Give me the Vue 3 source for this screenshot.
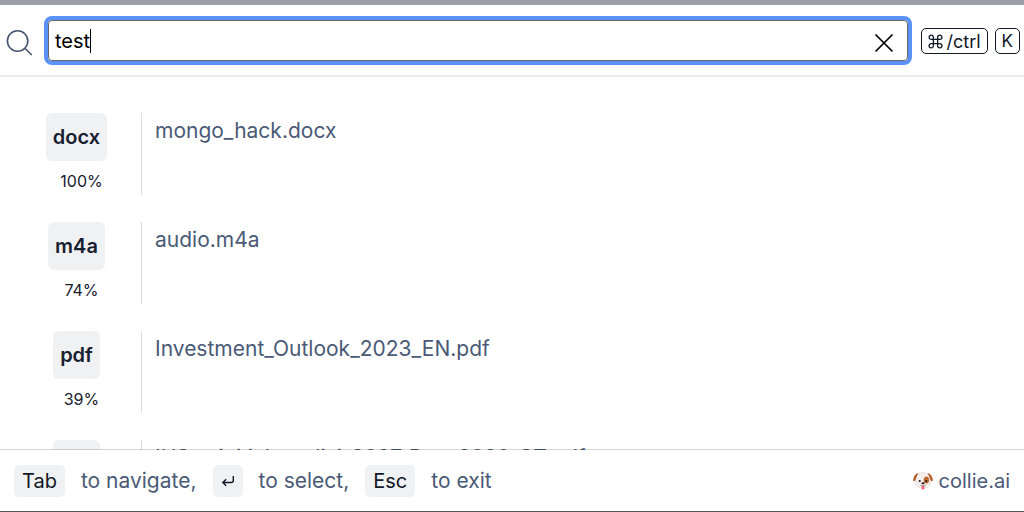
<script setup>
import { ref, onMounted } from 'vue'

const query = ref('test')
const searchInput = ref(null)

const results = ref([
  { type: 'docx', score: 100, name: 'mongo_hack.docx' },
  { type: 'm4a', score: 74, name: 'audio.m4a' },
  { type: 'pdf', score: 39, name: 'Investment_Outlook_2023_EN.pdf' },
  { type: 'pdf', score: 35, name: 'IHS_minitial_analisi_2027_Dec_2020_CT.pdf' }
])

function clearQuery() {
  query.value = ''
  searchInput.value.focus()
}

onMounted(() => {
  searchInput.value.focus()
})
</script>

<template>
  <div class="dialog">
    <!-- Search bar -->
    <header class="search-bar">
      <label class="search-label" for="search" aria-label="Search">
        <svg width="28" height="28" viewBox="0 0 28 28" fill="none" stroke="#44546f" stroke-width="1.6">
          <circle cx="11.6" cy="12" r="10.2" />
          <path d="M18.8 19.2L25.8 26" />
        </svg>
      </label>
      <div class="search-box">
        <div class="search-field">
          <input id="search" ref="searchInput" v-model="query" type="text" autocomplete="off" spellcheck="false" />
          <span v-if="query" class="caret"></span>
        </div>
        <button class="clear" type="button" aria-label="Clear" @click="clearQuery">
          <svg width="20" height="20" viewBox="0 0 20 20" fill="none" stroke="#000" stroke-width="1.7">
            <path d="M1.5 1.5L18.5 18.5M18.5 1.5L1.5 18.5" />
          </svg>
        </button>
      </div>
      <div class="shortcut">
        <kbd>
          <svg width="15" height="15" viewBox="0 0 14 14" fill="none" stroke="#111827" stroke-width="1.2">
            <path d="M5 5V3a2 2 0 1 0-2 2h8a2 2 0 1 0-2-2v8a2 2 0 1 0 2-2H3a2 2 0 1 0 2 2z" />
          </svg>
          <span>/ctrl</span>
        </kbd>
        <kbd>K</kbd>
      </div>
    </header>

    <!-- Results, cut off by the footer -->
    <ul class="results">
      <li v-for="item in results" :key="item.name" class="result">
        <div class="meta">
          <span class="type">{{ item.type }}</span>
          <span class="score">{{ item.score }}%</span>
        </div>
        <div class="name">{{ item.name }}</div>
      </li>
    </ul>

    <!-- Keyboard hints -->
    <footer class="hints">
      <kbd>Tab</kbd>
      <span>to navigate,</span>
      <kbd>
        <svg width="14" height="14" viewBox="0 0 14 14" fill="none" stroke="#111827" stroke-width="1.4">
          <path d="M12.3 2V6.5Q12.3 8.5 10.3 8.5H2M5.2 5.2L1.8 8.5L5.2 11.8" />
        </svg>
      </kbd>
      <span>to select,</span>
      <kbd>Esc</kbd>
      <span>to exit</span>
      <a class="brand" href="#">
        <svg width="20" height="20" viewBox="0 0 20 20">
          <path d="M10 1.4C15.4 1.4 17.6 5.5 17.8 10C18 14.8 14 17.4 10 17.4C6 17.4 2 14.8 2.2 10C2.4 5.5 4.6 1.4 10 1.4z" fill="#f3efec" stroke="#d9cdc6" stroke-width=".5" />
          <path d="M5.6 2.2C3 1.8 .6 5.4 .2 8.6C0 10.6 1.6 10.8 2.4 9C3.2 7 3.8 4.2 5.6 2.2z" fill="#b55a20" />
          <path d="M14.4 2.2C17 1.8 19.4 5.4 19.8 8.6C20 10.6 18.4 10.8 17.6 9C16.8 7 16.2 4.2 14.4 2.2z" fill="#b55a20" />
          <ellipse cx="13.4" cy="9" rx="2.7" ry="3.6" fill="#bf6a2c" />
          <circle cx="6.7" cy="10" r="1.1" fill="#2b1a14" />
          <circle cx="13.3" cy="10" r="1.1" fill="#2b1a14" />
          <ellipse cx="10" cy="12.2" rx="1.6" ry="1" fill="#2b1a14" />
          <path d="M7.5 14.2Q10 15.6 12.5 14.2" fill="none" stroke="#6b4a40" stroke-width=".6" />
          <path d="M8.7 15h2.6v2.2a1.3 1.3 0 0 1-2.6 0z" fill="#ee5f78" />
        </svg>
        <span>collie.ai</span>
      </a>
    </footer>
  </div>
</template>

<style>
body {
  background: #fff;
}
</style>

<style scoped>
.dialog {
  box-sizing: border-box;
  height: 100vh;
  display: flex;
  flex-direction: column;
  border-top: 5px solid #9c9fa8;
  border-bottom: 1px solid #55565c;
  background: #fff;
  color: #4a5a76;
  font-family: Inter, "Liberation Sans", sans-serif;
  font-size: 20px;
}

.search-bar {
  display: flex;
  align-items: center;
  padding: 11px 4px 10px 6px;
  border-bottom: 2px solid #ececed;
}
.search-label {
  display: flex;
  width: 38px;
  padding-top: 4px;
}
.search-box {
  flex: 1;
  display: flex;
  align-items: center;
  box-sizing: border-box;
  height: 41px;
  margin: 4px;
  padding-right: 13px;
  border: 1px solid #666;
  border-radius: 4px;
  box-shadow: 0 0 0 4px #5a92fa;
}
.search-field {
  position: relative;
  flex: 1;
  display: flex;
}
.search-field input {
  flex: 1;
  padding: 0 0 0 6px;
  border: 0;
  outline: none;
  background: transparent;
  color: #000;
  font: inherit;
  caret-color: transparent;
}
.caret {
  position: absolute;
  left: 41px;
  top: 0;
  width: 1px;
  height: 24px;
  background: #000;
}
.clear {
  display: flex;
  padding: 4px 0 0;
  border: 0;
  background: none;
}

.shortcut {
  display: flex;
  gap: 7px;
  margin-left: 9px;
}
.shortcut kbd {
  display: flex;
  align-items: center;
  gap: 4px;
  box-sizing: border-box;
  height: 26px;
  padding: 2px 6px 0;
  border: 1px solid #111827;
  border-radius: 5px;
  color: #111827;
  font-family: inherit;
  font-size: 18px;
}
.shortcut kbd:last-child {
  padding-top: 0;
  font-size: 17px;
}

.results {
  flex: 1;
  min-height: 0;
  overflow: hidden;
  margin: 0;
  padding: 36px 12px 0;
  list-style: none;
}
.result {
  display: flex;
  height: 82px;
  margin-bottom: 27px;
}
.meta {
  box-sizing: border-box;
  width: 130px;
  display: flex;
  flex-direction: column;
  align-items: center;
  gap: 10px;
  border-right: 1px solid #dcdcde;
}
.type {
  padding: 0 7px;
  border-radius: 6px;
  background: #f0f1f3;
  color: #172030;
  font-weight: 600;
  line-height: 48px;
}
.score {
  padding-left: 10px;
  color: #172030;
  font-size: 16px;
  line-height: 20px;
}
.name {
  padding: 5px 0 0 13px;
  font-size: 21px;
  line-height: 26px;
}

/* the top line lies over the last row of the list */
.hints {
  display: flex;
  align-items: center;
  height: 61px;
  margin-top: -1px;
  padding: 0 14px;
  border-top: 1px solid rgba(0, 0, 0, 0.16);
}
.hints kbd {
  display: flex;
  align-items: center;
  height: 32px;
  margin-right: 16px;
  padding: 0 8px;
  border-radius: 5px;
  background: #f0f1f3;
  color: #111827;
  font-family: inherit;
}
.hints > span {
  margin-right: 16px;
  font-size: 21px;
}
.brand {
  display: flex;
  align-items: center;
  gap: 6px;
  margin-left: auto;
  color: inherit;
  text-decoration: none;
}
</style>
